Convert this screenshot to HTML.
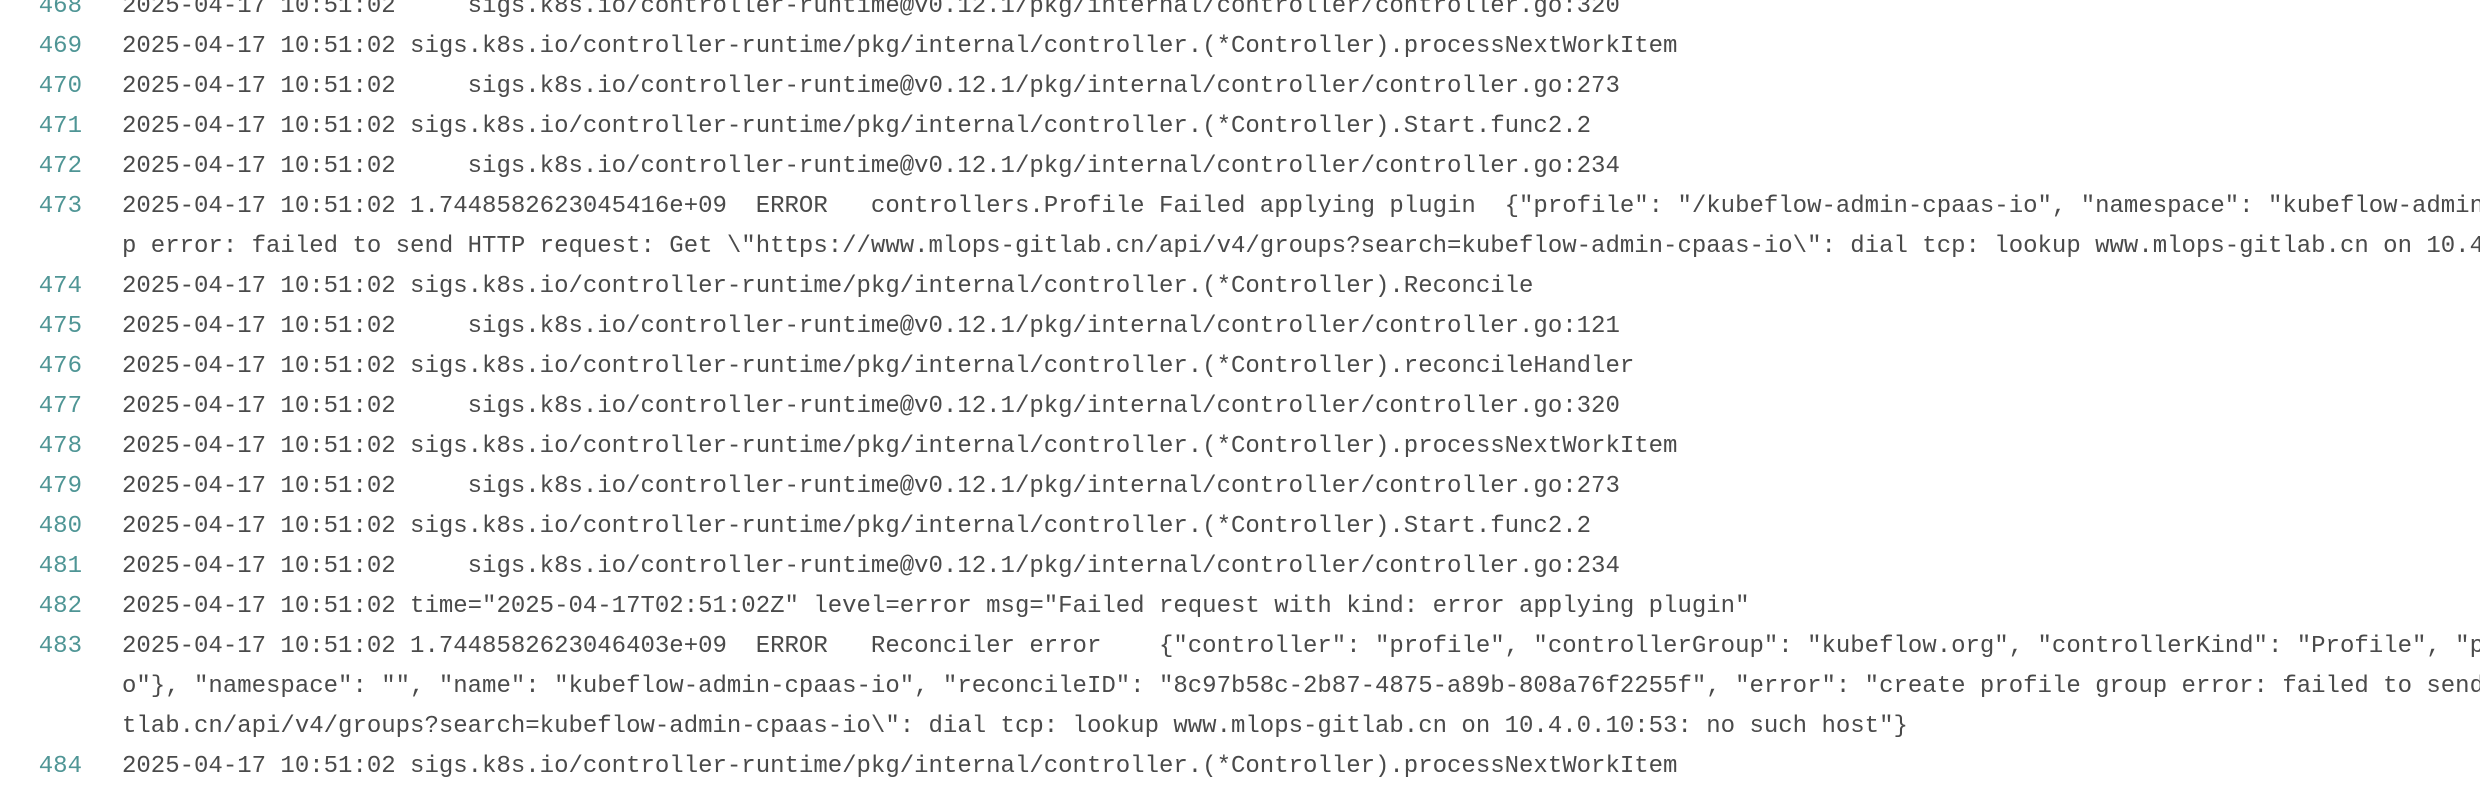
<!DOCTYPE html>
<html><head><meta charset="utf-8"><style>
html,body{margin:0;padding:0;background:#fff;width:2480px;height:792px;overflow:hidden}
.w{position:absolute;top:-13px;left:0;width:2480px}
.r{height:40px;line-height:40px;white-space:pre;font-family:"Liberation Mono","Courier New",monospace;font-size:24px;color:#4a4a4a;position:relative;overflow:hidden}
.n{position:absolute;left:0;width:82px;text-align:right;color:#4f9595}
.t{position:absolute;left:122px}
</style></head><body><div class="w">
<div class="r"><span class="n">468</span><span class="t">2025-04-17 10:51:02     sigs.k8s.io/controller-runtime@v0.12.1/pkg/internal/controller/controller.go:320</span></div>
<div class="r"><span class="n">469</span><span class="t">2025-04-17 10:51:02 sigs.k8s.io/controller-runtime/pkg/internal/controller.(*Controller).processNextWorkItem</span></div>
<div class="r"><span class="n">470</span><span class="t">2025-04-17 10:51:02     sigs.k8s.io/controller-runtime@v0.12.1/pkg/internal/controller/controller.go:273</span></div>
<div class="r"><span class="n">471</span><span class="t">2025-04-17 10:51:02 sigs.k8s.io/controller-runtime/pkg/internal/controller.(*Controller).Start.func2.2</span></div>
<div class="r"><span class="n">472</span><span class="t">2025-04-17 10:51:02     sigs.k8s.io/controller-runtime@v0.12.1/pkg/internal/controller/controller.go:234</span></div>
<div class="r"><span class="n">473</span><span class="t">2025-04-17 10:51:02 1.7448582623045416e+09  ERROR   controllers.Profile Failed applying plugin  {"profile": "/kubeflow-admin-cpaas-io", "namespace": "kubeflow-admin-cpaas-io", "error": "create profile group error: failed to send HTT</span></div>
<div class="r"><span class="t">p error: failed to send HTTP request: Get \"https://www.mlops-gitlab.cn/api/v4/groups?search=kubeflow-admin-cpaas-io\": dial tcp: lookup www.mlops-gitlab.cn on 10.4.0.10:53: no such host"}</span></div>
<div class="r"><span class="n">474</span><span class="t">2025-04-17 10:51:02 sigs.k8s.io/controller-runtime/pkg/internal/controller.(*Controller).Reconcile</span></div>
<div class="r"><span class="n">475</span><span class="t">2025-04-17 10:51:02     sigs.k8s.io/controller-runtime@v0.12.1/pkg/internal/controller/controller.go:121</span></div>
<div class="r"><span class="n">476</span><span class="t">2025-04-17 10:51:02 sigs.k8s.io/controller-runtime/pkg/internal/controller.(*Controller).reconcileHandler</span></div>
<div class="r"><span class="n">477</span><span class="t">2025-04-17 10:51:02     sigs.k8s.io/controller-runtime@v0.12.1/pkg/internal/controller/controller.go:320</span></div>
<div class="r"><span class="n">478</span><span class="t">2025-04-17 10:51:02 sigs.k8s.io/controller-runtime/pkg/internal/controller.(*Controller).processNextWorkItem</span></div>
<div class="r"><span class="n">479</span><span class="t">2025-04-17 10:51:02     sigs.k8s.io/controller-runtime@v0.12.1/pkg/internal/controller/controller.go:273</span></div>
<div class="r"><span class="n">480</span><span class="t">2025-04-17 10:51:02 sigs.k8s.io/controller-runtime/pkg/internal/controller.(*Controller).Start.func2.2</span></div>
<div class="r"><span class="n">481</span><span class="t">2025-04-17 10:51:02     sigs.k8s.io/controller-runtime@v0.12.1/pkg/internal/controller/controller.go:234</span></div>
<div class="r"><span class="n">482</span><span class="t">2025-04-17 10:51:02 time="2025-04-17T02:51:02Z" level=error msg="Failed request with kind: error applying plugin"</span></div>
<div class="r"><span class="n">483</span><span class="t">2025-04-17 10:51:02 1.7448582623046403e+09  ERROR   Reconciler error    {"controller": "profile", "controllerGroup": "kubeflow.org", "controllerKind": "Profile", "profile": {"name":"kubeflow-admin-cpaas-i</span></div>
<div class="r"><span class="t">o"}, "namespace": "", "name": "kubeflow-admin-cpaas-io", "reconcileID": "8c97b58c-2b87-4875-a89b-808a76f2255f", "error": "create profile group error: failed to send HTTP request: Get \"https://www.mlops-gi</span></div>
<div class="r"><span class="t">tlab.cn/api/v4/groups?search=kubeflow-admin-cpaas-io\": dial tcp: lookup www.mlops-gitlab.cn on 10.4.0.10:53: no such host"}</span></div>
<div class="r"><span class="n">484</span><span class="t">2025-04-17 10:51:02 sigs.k8s.io/controller-runtime/pkg/internal/controller.(*Controller).processNextWorkItem</span></div>
</div></body></html>
